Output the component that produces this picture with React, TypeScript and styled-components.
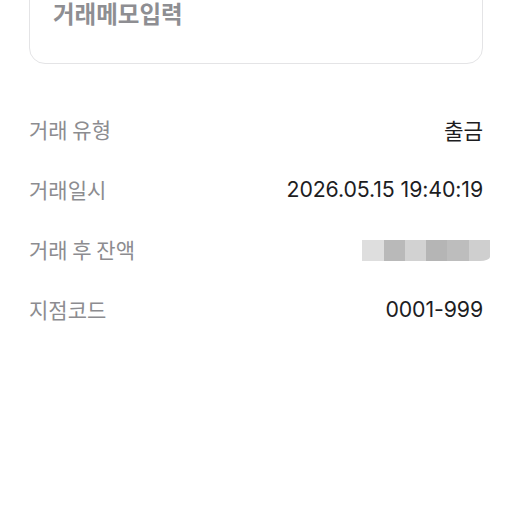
import styled, { createGlobalStyle } from "styled-components"

const GlobalStyle = createGlobalStyle`
  html, body {
    margin: 0;
    padding: 0;
    background: #ffffff;
    overflow: hidden;
  }
  body {
    font-family: "Noto Sans CJK KR", "Noto Sans", sans-serif;
  }
`

const Page = styled.div`
  width: 512px;
  height: 512px;
  padding: 0 29px;
  box-sizing: border-box;
  background: #ffffff;
`

const MemoBox = styled.div`
  margin-top: -42px;
  padding: 40px 23px 36px;
  border: 1px solid #e4e4e6;
  border-radius: 16px;
  font-size: 23.5px;
  line-height: 28px;
  font-weight: 700;
  color: #8e8e92;
`

const InfoList = styled.dl`
  margin: 35px 0 0;
  padding: 0;
`

const InfoRow = styled.div`
  display: flex;
  align-items: center;
  justify-content: space-between;
  height: 60px;
`

const Label = styled.dt`
  font-size: 21px;
  color: #8c8c90;
`

const Value = styled.dd`
  margin: 0;
  font-family: Inter, "Noto Sans CJK KR", sans-serif;
  font-size: 21.3px;
  color: #1d1d1f;
  letter-spacing: -0.1px;
`

const Masked = styled.div`
  display: flex;
  margin-right: -7px;
  margin-top: 2px;
`

const MaskCell = styled.span<{ shade: string; last?: boolean }>`
  width: 21.3px;
  height: 21px;
  background: ${p => p.shade};
  border-bottom-right-radius: ${p => (p.last ? "10px 4px" : "0")};
`

const maskShades = ["#dedede", "#b9b9b9", "#d2d2d2", "#b5b5b5", "#bdbdbd", "#cfcfcf"]

export default function App() {
  return (
    <>
      <GlobalStyle />
      <Page>
        <MemoBox>거래메모입력</MemoBox>
        <InfoList>
          <InfoRow>
            <Label>거래 유형</Label>
            <Value>출금</Value>
          </InfoRow>
          <InfoRow>
            <Label>거래일시</Label>
            <Value>2026.05.15 19:40:19</Value>
          </InfoRow>
          <InfoRow>
            <Label>거래 후 잔액</Label>
            <Masked>
              {maskShades.map((s, i) => (
                <MaskCell key={i} shade={s} last={i === maskShades.length - 1} />
              ))}
            </Masked>
          </InfoRow>
          <InfoRow>
            <Label>지점코드</Label>
            <Value>0001-999</Value>
          </InfoRow>
        </InfoList>
      </Page>
    </>
  )
}
